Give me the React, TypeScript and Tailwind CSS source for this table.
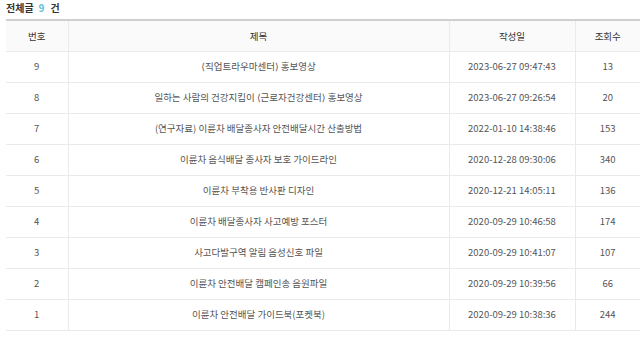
import React from "react";

const rows = [
  ["9", "⟨직업트라우마센터⟩ 홍보영상", "2023-06-27 09:47:43", "13"],
  ["8", "일하는 사람의 건강지킴이 ⟨근로자건강센터⟩ 홍보영상", "2023-06-27 09:26:54", "20"],
  ["7", "(연구자료) 이륜차 배달종사자 안전배달시간 산출방법", "2022-01-10 14:38:46", "153"],
  ["6", "이륜차 음식배달 종사자 보호 가이드라인", "2020-12-28 09:30:06", "340"],
  ["5", "이륜차 부착용 반사판 디자인", "2020-12-21 14:05:11", "136"],
  ["4", "이륜차 배달종사자 사고예방 포스터", "2020-09-29 10:46:58", "174"],
  ["3", "사고다발구역 알림 음성신호 파일", "2020-09-29 10:41:07", "107"],
  ["2", "이륜차 안전배달 캠페인송 음원파일", "2020-09-29 10:39:56", "66"],
  ["1", "이륜차 안전배달 가이드북(포켓북)", "2020-09-29 10:38:36", "244"],
];

export default function App() {
  return (
    <div
      className="w-[640px] h-[339px] bg-white overflow-hidden pl-[6px]"
      style={{ fontFamily: '"Noto Sans CJK KR", "Noto Sans", "DejaVu Sans", sans-serif' }}
    >
      <div className="h-[16px] flex items-center text-[10px] font-bold text-[#333] leading-none">
        <span>전체글</span>
        <span className="ml-[5px] text-[#5bc0de]">9</span>
        <span className="ml-[6px]">건</span>
      </div>
      <table className="mt-[3px] w-[634px] border-collapse table-fixed text-[9.5px] text-[#555] border-t-2 border-t-[#cfcfcf]">
        <colgroup>
          <col className="w-[62px]" />
          <col className="w-[381px]" />
          <col className="w-[126px]" />
          <col className="w-[65px]" />
        </colgroup>
        <thead>
          <tr className="h-[31px] bg-[#fafafa] text-[#333]">
            <th className="font-normal border-b border-[#eaeaea] border-r">번호</th>
            <th className="font-normal border-b border-[#eaeaea] border-r">제목</th>
            <th className="font-normal border-b border-[#eaeaea] border-r">작성일</th>
            <th className="font-normal border-b border-[#eaeaea]">조회수</th>
          </tr>
        </thead>
        <tbody>
          {rows.map((r) => (
            <tr key={r[0]} className="h-[31px]">
              <td className="text-center border-b border-r border-[#eaeaea]">{r[0]}</td>
              <td className="text-center border-b border-r border-[#eaeaea]">{r[1]}</td>
              <td className="text-center border-b border-r border-[#eaeaea]">{r[2]}</td>
              <td className="text-center border-b border-[#eaeaea]">{r[3]}</td>
            </tr>
          ))}
        </tbody>
      </table>
    </div>
  );
}
